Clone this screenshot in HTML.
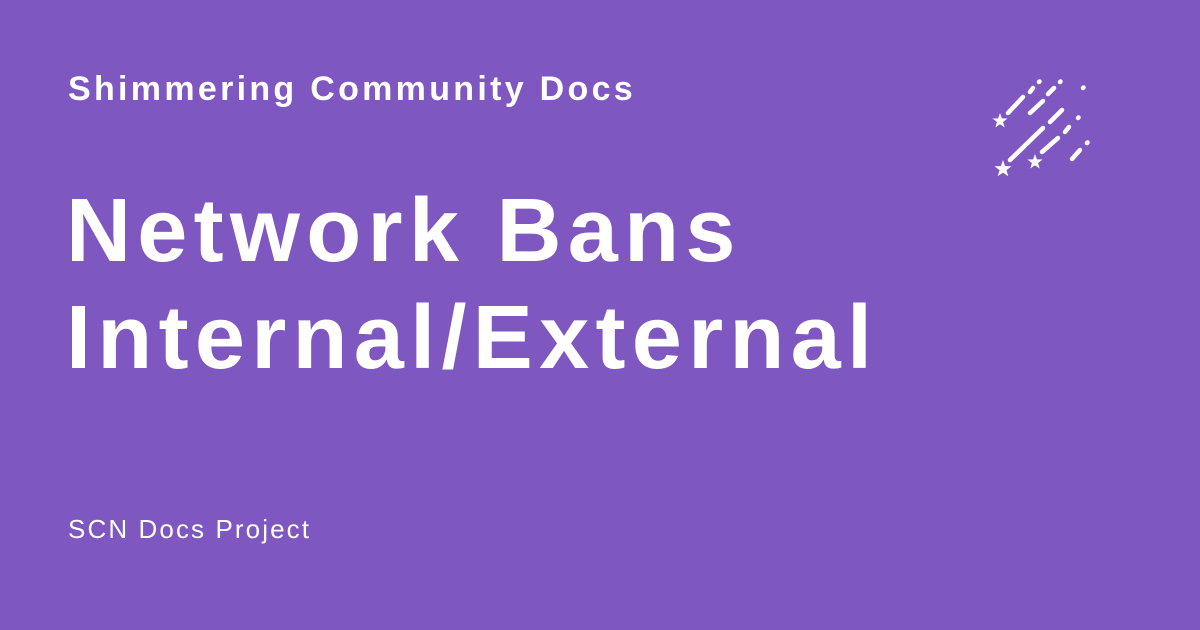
<!DOCTYPE html>
<html><head><style>
html,body{margin:0;padding:0}
body{width:1200px;height:630px;background:#7e57c1;position:relative;overflow:hidden;font-family:"Liberation Sans",sans-serif;color:#fff}
.s{position:absolute;left:68px;top:70px;font-size:34px;font-weight:bold;letter-spacing:3.3px;white-space:nowrap}
.t{position:absolute;left:66px;top:178px;font-size:90px;font-weight:bold;line-height:107px;letter-spacing:6.3px;white-space:nowrap}
.f{position:absolute;left:68px;top:514px;font-size:26px;letter-spacing:2.1px;white-space:nowrap}
svg{position:absolute;left:0;top:0}
</style></head><body>
<div class="s">Shimmering Community Docs</div>
<div class="t">Network Bans<br>Internal/External</div>
<div class="f">SCN Docs Project</div>
<svg width="1200" height="630" viewBox="0 0 1200 630">
<g stroke="#fff" stroke-width="4.5" stroke-linecap="round" fill="none">
<path d="M1008 113L1023 97M1030 92L1033 88M1039 82L1039.5 81.5"/>
<path d="M1030 113L1043 101M1048 94L1054 88M1060 82L1060.5 81.5"/>
<path d="M1010 160L1043 128M1050 122L1062 110M1083 88L1083.5 87.5"/>
<path d="M1042 152L1058 138M1065 132L1069 127M1078 118L1078.5 117.5"/>
<path d="M1072 159L1080 150M1087 143L1087.5 142.5"/>
</g>
<g fill="#fff">
<polygon transform="translate(1000,121) scale(8)" points="0,-1 0.235,-0.324 0.951,-0.309 0.38,0.124 0.588,0.809 0,0.4 -0.588,0.809 -0.38,0.124 -0.951,-0.309 -0.235,-0.324"/>
<polygon transform="translate(1003,169) scale(9)" points="0,-1 0.235,-0.324 0.951,-0.309 0.38,0.124 0.588,0.809 0,0.4 -0.588,0.809 -0.38,0.124 -0.951,-0.309 -0.235,-0.324"/>
<polygon transform="translate(1035,162) scale(8)" points="0,-1 0.235,-0.324 0.951,-0.309 0.38,0.124 0.588,0.809 0,0.4 -0.588,0.809 -0.38,0.124 -0.951,-0.309 -0.235,-0.324"/>
</g>
</svg>
</body></html>
